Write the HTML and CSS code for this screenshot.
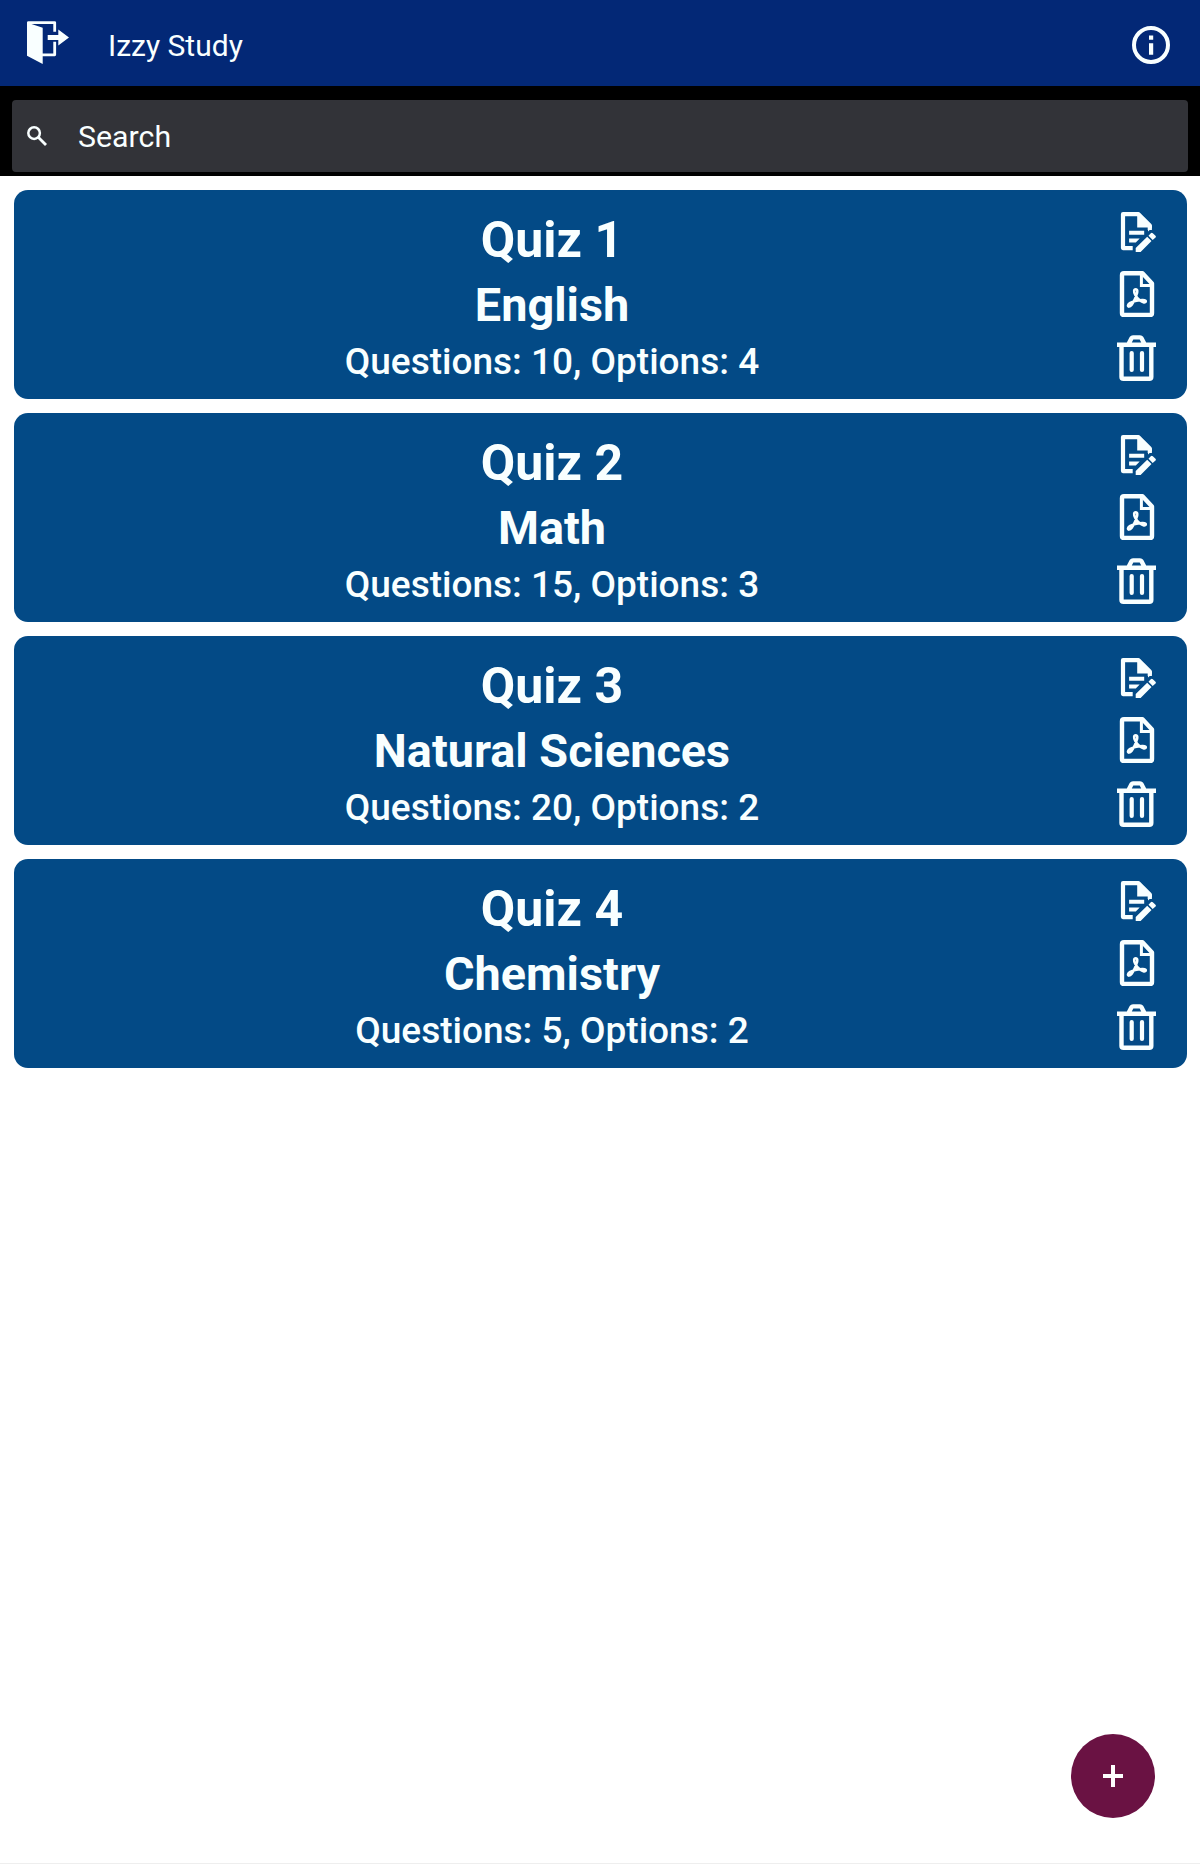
FILE: index.html
```
<!DOCTYPE html>
<html lang="en">
<head>
    <meta charset="UTF-8">
    <title>Izzy Study</title>
    <link rel="stylesheet" href="styles.css">
</head>
<body>
    <!-- shared icons -->
    <svg class="sprite">
        <symbol id="icon-edit" viewBox="0 0 40 40">
            <path fill="none" stroke="currentColor" stroke-width="4.2" stroke-linejoin="round" d="M15.7 36.1H6V2.2H21.5L32.8 13.5V18"/>
            <path fill="currentColor" d="M20.2 2L34.9 13.7V16L31 19.5V15.5H20.2zM12.1 18.8H27.2V22.8H12.1zM12.1 26.5H22.7L18.8 30.5H12.1zM18.7 40.2V36L30.2 24.8L34.5 29L23.4 40.2zM31.5 23.7L33.8 21.2Q34.8 20.3 35.8 21.2L38.5 23.8Q39.3 24.6 38.5 25.5L35.7 28z"/>
        </symbol>
        <symbol id="icon-pdf" viewBox="0 0 40 46">
            <path fill="none" stroke="currentColor" stroke-width="4.4" stroke-linejoin="round" d="M25.5 2.3H7Q5 2.3 5 4.3V42Q5 44 7 44H33Q35 44 35 42V12.5z"/>
            <path fill="none" stroke="currentColor" stroke-width="3" d="M24.4 2.5V14.6H36"/>
            <path fill="none" stroke="currentColor" stroke-width="2.6" stroke-linejoin="round" d="M18.4 24C16.4 20.5 17 18.3 18.7 18.3S21 20.5 19.2 24.5C18.5 28 16.5 31 14.5 34C12.8 36.2 11 35.8 11 34.6C11 32.5 16 30.6 19.5 29.8C24 28.6 28.8 28.6 28.8 30.3C28.8 32 25.5 31.6 23 29.6C20.8 28 19.2 26 18.4 24z"/>
        </symbol>
        <symbol id="icon-trash" viewBox="0 0 40 46">
            <path fill="none" stroke="currentColor" stroke-width="4.4" stroke-linejoin="round" d="M4.5 10V42Q4.5 43.8 6.5 43.8H32.3Q34.3 43.8 34.3 42V10M0 9.8H39M11.5 9L14.5 3.2Q15 2.4 16 2.4H23Q24 2.4 24.5 3.2L27.5 9"/>
            <path fill="none" stroke="currentColor" stroke-width="4.2" stroke-linecap="round" d="M14.7 18V35M25 18V35"/>
        </symbol>
    </svg>

    <header class="toolbar">
        <svg class="icon-exit" viewBox="0 0 42 43">
            <path fill="none" stroke="currentColor" stroke-width="2.8" stroke-linejoin="round" d="M1.4 3V1.6H27.7V10.7M27.7 20.7V33.8H15"/>
            <path fill="currentColor" d="M0 1.5L15.7 6.7V43L0 34.7zM20.7 14H31.3V8.5L42 16.4L31.3 24.5V19H20.7z"/>
        </svg>
        <h1>Izzy Study</h1>
        <svg class="icon-info" viewBox="0 0 38 38">
            <circle cx="19" cy="19" r="17" fill="none" stroke="currentColor" stroke-width="4"/>
            <path fill="currentColor" d="M17 9.6h4.2v4.2H17zM17 17.2h4.2v11.6H17z"/>
        </svg>
    </header>

    <div class="search-area">
        <div class="search-box">
            <svg class="icon-search" viewBox="0 0 20 20">
                <circle cx="7.1" cy="7.1" r="5.8" fill="none" stroke="currentColor" stroke-width="2.5"/>
                <path d="M11.3 11.3L19 19" stroke="currentColor" stroke-width="2.8"/>
            </svg>
            <span>Search</span>
        </div>
    </div>

    <main class="quiz-list">
        <div class="quiz-card">
            <div class="quiz-info">
                <h2>Quiz 1</h2>
                <h3>English</h3>
                <p>Questions: 10, Options: 4</p>
            </div>
            <div class="quiz-actions">
                <svg class="edit"><use href="#icon-edit"/></svg>
                <svg><use href="#icon-pdf"/></svg>
                <svg><use href="#icon-trash"/></svg>
            </div>
        </div>
        <div class="quiz-card">
            <div class="quiz-info">
                <h2>Quiz 2</h2>
                <h3>Math</h3>
                <p>Questions: 15, Options: 3</p>
            </div>
            <div class="quiz-actions">
                <svg class="edit"><use href="#icon-edit"/></svg>
                <svg><use href="#icon-pdf"/></svg>
                <svg><use href="#icon-trash"/></svg>
            </div>
        </div>
        <div class="quiz-card">
            <div class="quiz-info">
                <h2>Quiz 3</h2>
                <h3>Natural Sciences</h3>
                <p>Questions: 20, Options: 2</p>
            </div>
            <div class="quiz-actions">
                <svg class="edit"><use href="#icon-edit"/></svg>
                <svg><use href="#icon-pdf"/></svg>
                <svg><use href="#icon-trash"/></svg>
            </div>
        </div>
        <div class="quiz-card">
            <div class="quiz-info">
                <h2>Quiz 4</h2>
                <h3>Chemistry</h3>
                <p>Questions: 5, Options: 2</p>
            </div>
            <div class="quiz-actions">
                <svg class="edit"><use href="#icon-edit"/></svg>
                <svg><use href="#icon-pdf"/></svg>
                <svg><use href="#icon-trash"/></svg>
            </div>
        </div>
    </main>

    <button class="fab" aria-label="Add quiz">
        <svg viewBox="0 0 20 22"><path d="M10 0V22M0 11H20" stroke="currentColor" stroke-width="4"/></svg>
    </button>
</body>
</html>
```

FILE: styles.css
```
* {
    box-sizing: border-box;
}
body {
    font-family: Roboto, 'Liberation Sans', sans-serif;
    background: #fff;
    color: #f9ffff;
    margin: 0;
    height: 1864px;
    border-bottom: 1px solid #eee;
}
h1, h2, h3, p {
    margin: 0;
}
svg {
    display: block;
    flex-shrink: 0;
}
.sprite {
    display: none;
}

.toolbar {
    display: flex;
    align-items: center;
    height: 86px;
    padding: 3px 30px 0 27px;
    background: #032876;
}
.toolbar h1 {
    margin-left: 39px;
    flex: 1;
    font-size: 30px;
    font-weight: 400;
    line-height: 40px;
    padding-top: 2px;
}
.icon-exit {
    width: 42px;
    height: 43px;
    margin-bottom: 5px;
}
.icon-info {
    width: 38px;
    height: 38px;
}

.search-area {
    height: 90px;
    padding: 14px 12px 4px;
    background: #000;
}
.search-box {
    display: flex;
    align-items: center;
    height: 72px;
    padding-left: 15px;
    border-radius: 4px;
    background: #323338;
    font-size: 30.3px;
}
.icon-search {
    width: 20px;
    height: 20px;
    margin-right: 31px;
}

.quiz-list {
    display: flex;
    flex-direction: column;
    gap: 14px;
    padding: 14px 13px 0 14px;
}
.quiz-card {
    display: flex;
    height: 209px;
    border-radius: 14px;
    background: #034a86;
}
.quiz-info {
    flex: 1;
    padding-top: 16px;
    text-align: center;
}
.quiz-info h2 {
    font-size: 50px;
    line-height: 68px;
}
.quiz-info h3 {
    font-size: 46.8px;
    line-height: 62px;
}
.quiz-info p {
    font-size: 37px;
    font-weight: 500;
    line-height: 51px;
}
.quiz-actions {
    width: 97px;
    padding: 22px 0 0 27px;
}
.quiz-actions svg {
    width: 40px;
    height: 46px;
    margin-bottom: 18px;
}
.quiz-actions .edit {
    height: 40px;
    margin-bottom: 19px;
}

/* floating add button */
.fab {
    position: absolute;
    right: 45px;
    top: 1734px;
    width: 84px;
    height: 84px;
    padding: 0;
    border: none;
    border-radius: 50%;
    background: #6a1243;
    color: #fff;
    display: flex;
    align-items: center;
    justify-content: center;
}
.fab svg {
    width: 20px;
    height: 22px;
}
```
